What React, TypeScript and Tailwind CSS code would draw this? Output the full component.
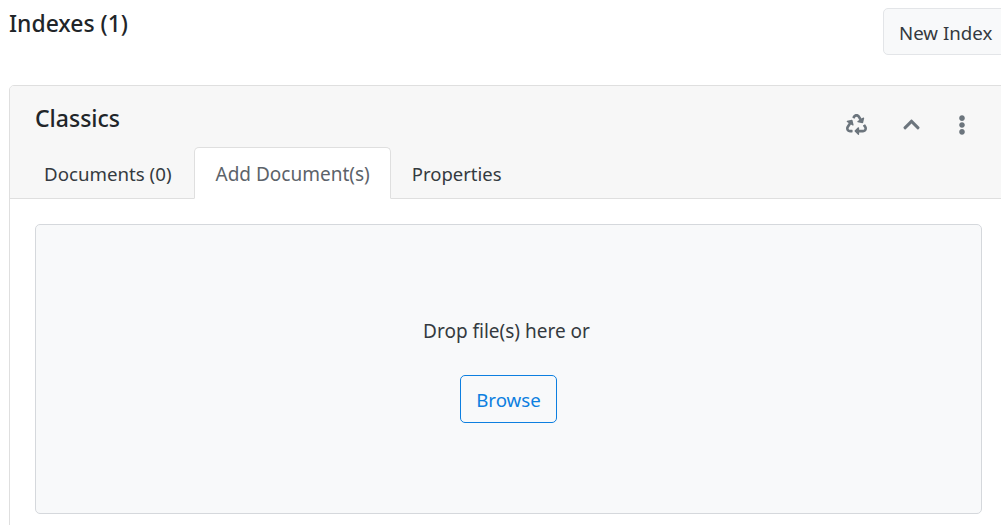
import { FaChevronUp, FaEllipsisV, FaRecycle } from 'react-icons/fa';

export default function App() {
  return (
    <div className="w-[1001px] h-[525px] overflow-hidden bg-white text-[#212529] font-['Noto_Sans','Open_Sans',sans-serif]">
      <div className="flex justify-between items-start pl-[9px] pt-2 h-[85px]">
        <h1 className="text-[22.9px] leading-[34px] font-medium -mt-px">Indexes (1)</h1>
        <button className="w-[130px] h-[47px] shrink-0 -mr-3 pl-[15px] pt-1 text-left text-[18.7px] text-[#343a40] bg-[#f8f9fa] border border-[#e3e5e8] rounded-[5px]">
          New Index
        </button>
      </div>
      <div className="ml-[9px] w-[1010px] h-[500px] border border-[#dfdfdf] rounded-[5px] overflow-hidden">
        <div className="bg-[#f7f7f7] border-b border-[#dfdfdf] h-[113px] flex flex-col justify-between">
          <div className="flex justify-between pl-[25px] pt-[15px]">
            <h2 className="text-[23px] leading-[34px] font-medium">Classics</h2>
            <div className="flex items-center pr-[46px] pt-[13px] text-[#6c757d]">
              <FaRecycle className="w-[21px] h-[21px] mr-[35px]" />
              <FaChevronUp className="w-[19px] h-[19px] mr-[31px]" />
              <FaEllipsisV className="w-[20px] h-[20px]" />
            </div>
          </div>
          <div className="flex items-end pl-[9px] -mb-px">
            <div className="pl-[25px] pr-[22px] h-[50px] flex items-center text-[18.7px] text-[#343a40]">Documents (0)</div>
            <div className="pl-[21px] pr-[20px] pt-[2px] h-[52px] flex items-center text-[19px] text-[#5c636a] bg-white border border-[#dfdfdf] border-b-white rounded-t-[5px]">
              Add Document(s)
            </div>
            <div className="px-[21px] h-[50px] flex items-center text-[18.5px] text-[#343a40]">Properties</div>
          </div>
        </div>
        <div className="pl-[25px] pt-[25px]">
          <div className="w-[947px] h-[290px] bg-[#f8f9fa] border border-[#d5d8dc] rounded-[5px] flex flex-col items-center pt-[91px]">
            <p className="text-[19px] leading-[30px] text-[#343a40] mr-1">Drop file(s) here or</p>
            <button className="mt-[29px] w-[97px] h-[48px] pt-[2px] text-[18.7px] text-[#0d7fe0] border border-[#0d7fe0] rounded-[5px]">
              Browse
            </button>
          </div>
        </div>
      </div>
    </div>
  );
}
